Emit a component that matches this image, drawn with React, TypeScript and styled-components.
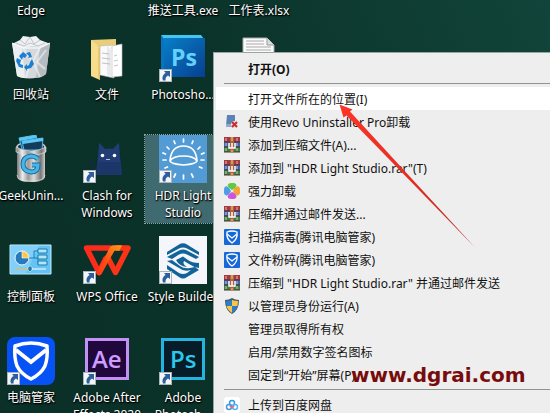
import React from "react";
import styled, { createGlobalStyle, css } from "styled-components";

const GlobalStyle = createGlobalStyle`
  * { box-sizing: border-box; }
  html, body, #root { height: 100%; }
  body {
    margin: 0;
    overflow: hidden;
    font-family: "Noto Sans", "Noto Sans CJK SC", sans-serif;
    font-size: 12px;
  }
`;

const Desktop = styled.main`
  position: relative;
  height: 100vh;
  overflow: hidden;
  padding-top: 2px;
  background: linear-gradient(70deg, #0a3028 0%, #0b3229 45%, #11443a 100%);
`;

const IconGrid = styled.div`
  display: grid;
  grid-template-columns: repeat(4, 76px);
  grid-template-rows: 32px;
  grid-auto-rows: 101px;
  margin-left: -7px;
`;

const Tile = styled.button<{ $selected?: boolean }>`
  display: flex;
  flex-direction: column;
  align-items: center;
  gap: 4px;
  padding: 0;
  border: 0;
  background: none;
  font: inherit;
  color: #fff;
  ${(p) =>
    p.$selected &&
    css`
      align-self: start;
      height: 88px;
      background: #3f6b70;
      outline: 1px dotted #8ba6a4;
    `}
`;

const Label = styled.span`
  line-height: 17px;
  text-align: center;
  white-space: pre;
  text-shadow: 0 1px 2px #000, 1px 1px 1px #000;
`;

const IconFrame = styled.span`
  position: relative;
  flex: none;
  width: 48px;
  height: 48px;
  & > svg { display: block; }
`;

const Badge = styled.svg`
  position: absolute;
  left: 0;
  bottom: 0;
`;

const Menu = styled.nav`
  position: absolute;
  left: 213px;
  top: 52px;
  right: 0;
  bottom: 0;
  overflow: hidden;
  padding: 4px 0 0 2px;
  border: solid #9aa5a1;
  border-width: 1px 0 0 1px;
  background: #eee;
`;

const MenuRow = styled.button<{ $active?: boolean; $bold?: boolean }>`
  display: flex;
  align-items: center;
  gap: 8px;
  width: 100%;
  height: 23px;
  padding: 0 8px;
  border: 0;
  background: ${(p) => (p.$active ? "#fff" : "transparent")};
  font: inherit;
  font-weight: ${(p) => (p.$bold ? 700 : 400)};
  color: #111;
  white-space: pre;
`;

const MenuIcon = styled.span`
  flex: none;
  width: 16px;
  height: 16px;
  & > svg { display: block; }
`;

const Separator = styled.hr`
  height: 1px;
  margin: 3px 0 3px 8px;
  border: 0;
  background: #929292;
`;

const Pointer = styled.svg`
  position: absolute;
  left: 336px;
  top: 102px;
  pointer-events: none;
`;

const Watermark = styled.span`
  position: absolute;
  left: 351px;
  top: 363px;
  font: 700 20px/24px "DejaVu Sans", sans-serif;
  color: #780c0c;
`;

const Shortcut = () => (
  <Badge width="13" height="13" viewBox="0 0 13 13">
    <rect x=".5" y=".5" width="12" height="12" fill="#f3f6f9" stroke="#a9b4bb" />
    <path d="M5 2h6v6L9 6.400C7 7.500 6.200 9 6.600 11.500H4C2.700 8.400 4 5.500 6.700 4.100Z" fill="#2d5e9b" />
  </Badge>
);

const Art = ({ children }: { children: React.ReactNode }) => (
  <svg width="48" height="48" viewBox="0 0 48 48">{children}</svg>
);

const RecycleBin = () => (
  <Art>
    <path d="M5 9 10 42q14 6 29-2L43 9Z" fill="#d5d9dc" />
    <path d="m5 9 10 5 3 30q-5 0-8-2Z" fill="#eceff1" />
    <path d="M43 9 33 14l-4 30q6 0 10-4Z" fill="#b7bcc0" />
    <path d="m16 14 8 12-5 18M33 14l-7 13 7 16M39 16l-9 12 8 7" fill="none" stroke="#f4f5f6" strokeWidth="2" opacity=".6" />
    <path d="m7 9 6-3 3-4 7 1 6-1 4 4 8 3-7 4-9-1-8 2Z" fill="#f0f1f2" />
    <path d="m13 6 5 4 5-7 4 7 6-4M9 9l8 3 6-3 8 3 7-3" fill="none" stroke="#bfc4c8" />
    <path d="m5 9 11 5h17l10-5" fill="none" stroke="#fff" />
    <path d="m12 22 4-4 4 3-2 3-2-1-1 3Z M19 19l4-1 2 5-4 1 1-2Z M10 24l4 2-1 4 3 1v3l-4-1-3-6Z M25 25l2 5-3 4-4 1v2l-3-4 3-3v2l2-1 1-3Z" fill="#1b7fd2" />
  </Art>
);

const Folder = () => (
  <Art>
    <path d="M8 6 33 5v34H17Z" fill="#e9cd78" />
    <path d="m17 12 14-1v33l-14-3Z" fill="#fafafa" stroke="#b5b5b5" strokeWidth=".6" />
    <path d="m29 12 10-2v32l-10 1Z" fill="#fff" stroke="#b9b9b9" strokeWidth=".6" />
    <path d="m24 11 5 7v25l-5-2Z" fill="#e8e9ea" />
    <path d="m19 19 7 1m-7 4 8 1m-8 4 8 1m4-8 3-1m-3 6 4-1m-4 6 4-1" stroke="#aaa" strokeWidth=".7" />
    <path d="M8 6q5 3 8 8l1 32-9-4Z" fill="#f7dc8c" />
    <path d="M16 14v31" stroke="#d8b964" />
  </Art>
);

const PhotoshopOld = () => (
  <Art>
    <defs>
      <linearGradient id="ps" x2="1" y2="1"><stop stopColor="#087fc7" /><stop offset="1" stopColor="#073f91" /></linearGradient>
    </defs>
    <path d="m2 1 3 4v39l-3-3Z" fill="#0873c5" />
    <path d="M2 1h40l3 4H5Z" fill="#42c7f3" />
    <rect x="5" y="4" width="41" height="39" fill="url(#ps)" />
    <text x="12" y="32" fontFamily="Open Sans" fontWeight="700" fontSize="23" fill="#62d2fa">Ps</text>
  </Art>
);

const Spreadsheet = () => (
  <Art>
    <path d="M8 4h24l7 7v36H8Z" fill="#fafafa" stroke="#aaa" />
    <path d="M32 4v7h7" fill="#ddd" stroke="#999" />
    <path d="M11 7h18M11 10h18M11 13h25M11 16h25" stroke="#aaa" />
  </Art>
);

const Geek = () => (
  <Art>
    <defs>
      <linearGradient id="steel"><stop stopColor="#777" /><stop offset=".2" stopColor="#eee" /><stop offset=".4" stopColor="#999" /><stop offset=".6" stopColor="#ddd" /><stop offset=".85" stopColor="#777" /><stop offset="1" stopColor="#ccc" /></linearGradient>
    </defs>
    <path d="M10 14v27q0 6 14 6t14-6V14Z" fill="url(#steel)" />
    <ellipse cx="24" cy="12" rx="14" ry="5" fill="#162a3a" stroke="#ccc" strokeWidth="1.500" />
    <path d="m12 3 17-3 3 14H15Z" fill="#1b5b88" stroke="#4fb9ea" />
    <path d="m12 3 17-3 .6 3L13 6Z" fill="#5cc7f2" />
    <path d="m15 6 21-3-1 12H17Z" fill="#153b5b" stroke="#4fb9ea" />
    <path d="m15 6 21-3v3L16 9Z" fill="#5cc7f2" />
    <path d="M9 12v5q15 7 30 0v-5q-15 8-30 0Z" fill="url(#steel)" stroke="#e5e5e5" strokeWidth=".6" />
    <path d="M31 24q-3-3-7-3-8 1-8 8t8 8q7 0 7-7h-6" fill="none" stroke="#176f9f" strokeWidth="5" />
    <path d="M31 24q-3-3-7-3-8 1-8 8t8 8q7 0 7-7h-6" fill="none" stroke="#48b5e8" strokeWidth="3" />
    <path d="M10 40q0 6 14 6t14-6" fill="none" stroke="#ddd" strokeWidth=".7" />
  </Art>
);

const Clash = () => (
  <Art>
    <path d="M10 25q-3 1-3 4t5 5h4" fill="none" stroke="#15294e" strokeWidth="1.500" />
    <path d="M16 8q3 2 6 6 4-1 8 0 3-4 6-6l1 14 2 18H13l2-18Z" fill="#203d76" />
    <path d="M14 27h24l1 13H13Z" fill="#1a3263" opacity=".65" />
    <circle cx="19.500" cy="20.500" r="1.800" fill="#fff" /><circle cx="31.500" cy="20.500" r="1.800" fill="#fff" />
    <path d="m23 24 1 1 1-1 1 1 1-1" stroke="#dfe7f5" strokeWidth=".8" fill="none" />
  </Art>
);

const Hdr = () => (
  <Art>
    <path d="M0 0h48v48H0Z" fill="#529bd4" />
    <g fill="none" stroke="#fff" strokeWidth="1.700">
      <path d="M11 26Q12 11 24.500 11T38 26q-1 3-13.500 4Q12 29 11 26Z" />
      <path d="M11 26q3-5 13.500-5T38 26" />
      <path strokeLinecap="round" d="M24.500 4v3M15 6l1 2.500M34 6l-1 2.500M8 12l2 2m31-2-2 2M4 18l2.500 1M45 18l-2.500 1M4 25h3m38 0h-3M6 33l2.500-1M43 33l-2.500-1M15 42l1.500-3M34 42l-1.500-3M24.500 40v4" />
    </g>
  </Art>
);

const ControlPanel = () => (
  <Art>
    <path d="M3 9h41v29H3Z" fill="#64c2f5" stroke="#c2edff" />
    <path d="M4 10h28L19 37H4Z" fill="#9bdbfb" opacity=".55" />
    <circle cx="15" cy="22" r="7" fill="#287bbb" stroke="#e9f8ff" />
    <path d="M15 22v-7a7 7 0 0 1 7 7Z" fill="#ffc74d" stroke="#fff" strokeWidth=".6" />
    <path d="M22 22h5v-7h4M27 22h4v6" fill="none" stroke="#1681b8" />
    <path d="M31 13h9v4h-9Zm0 6h9v4h-9Zm0 6h9v4h-9Z" fill="#b4e5fb" stroke="#167cad" />
    <path d="M8 33h15" stroke="#f4b942" /><path d="M24 33h15" stroke="#fff" />
    <path d="m21 31 2-1 2 1v3l-2 2-2-2Z" fill="#167cad" stroke="#fff" strokeWidth=".5" />
  </Art>
);

const Wps = () => (
  <Art>
    <defs>
      <linearGradient id="fold" x1="1" y1="0" x2="0" y2="1"><stop stopColor="#ff9a1c" /><stop offset=".6" stopColor="#ff4a15" /><stop offset="1" stopColor="#ff3a12" /></linearGradient>
    </defs>
    <path d="M28 12H3.500L16 36.500 23 22" fill="none" stroke="#fb2c1c" strokeWidth="5.500" strokeLinejoin="round" />
    <path d="m23.500 19 9 17.500L45 12H33" fill="none" stroke="#fb3418" strokeWidth="5.500" strokeLinejoin="round" />
    <path d="M13.500 37.500 27 11q1-1.800 3-1.800h9l-2.500 5.500h-5L18.500 38q-2.500 3-5-.5Z" fill="url(#fold)" />
  </Art>
);

const StyleBuilder = () => (
  <Art>
    <path d="M0 0h48v48H0Z" fill="#f4f6fb" />
    <g fill="#126398">
      <path d="M8 16 20 8.500q4-2.500 8 0L40 16v3l-12-6.500q-4-2-8 0L8 19Z" />
      <path d="M8 21l12-6.500q4-2 8 0L40 21l-3 2-9-4.500q-4-2-8 0l-7 4.500Z" />
      <path d="m8 25 5-1 8 6q4 3 10 2l5-1 4 3-12 7q-4 3-8 0L8 33v-4l12 8q4 2 8 0l4-3q-7 2-12-2Z" />
      <path d="m17 24 7-3.500 5 3.500q4 3 11 3v5q-6-1-10-4l-5-3q-2 3 3 6-8-1-11-7Z" />
    </g>
  </Art>
);

const Manager = () => (
  <Art>
    <rect width="48" height="48" rx="8" fill="#0752f5" />
    <path d="M8 9q16-6 32 0 1 12-2 20-4 8-14 13Q14 37 10 29 7 21 8 9Z" fill="none" stroke="#fff" strokeWidth="3.500" strokeLinejoin="round" />
    <path d="m9 13 15 12 15-12" fill="none" stroke="#fff" strokeWidth="4" />
  </Art>
);

const AfterEffects = () => (
  <Art>
    <path d="M3.500 2.500h41v39h-41Z" fill="#21083c" stroke="#c391f5" strokeWidth="3" />
    <text x="9" y="31" fontFamily="Open Sans" fontWeight="600" fontSize="24" fill="#cf9cff">Ae</text>
  </Art>
);

const Photoshop = () => (
  <Art>
    <path d="M3.500 2.500h41v39h-41Z" fill="#061d28" stroke="#25b4df" strokeWidth="3" />
    <text x="11" y="31" fontFamily="Open Sans" fontWeight="600" fontSize="24" fill="#2dc6ec">Ps</text>
  </Art>
);

const Small = ({ children }: { children: React.ReactNode }) => (
  <svg width="16" height="16" viewBox="0 0 16 16">{children}</svg>
);

const Revo = () => (
  <Small>
    <path d="M3 1h8v11H2Z" fill="#5c83b8" /><path d="M2 10h8v3H2Z" fill="#8faccd" />
    <circle cx="10.500" cy="10.500" r="3.500" fill="#f0dede" />
    <path d="m8 8 5 5m0-5-5 5" stroke="#c82c2c" strokeWidth="2" />
  </Small>
);

const Rar = () => (
  <Small>
    <path d="M0 0h16v5H0Z" fill="#a53942" /><path d="M0 5h16v5H0Z" fill="#3965b2" /><path d="M0 10h16v5H0Z" fill="#358345" />
    <path d="M0 5h16M0 10h16M0 15h16" stroke="#542b2b" />
    <path d="M2 1v3m11-3v3M2 6v3m11-3v3M2 11v3m11-3v3" stroke="#e6bcb3" />
    <path d="M6 0h4v15H6Z" fill="#b2613d" /><path d="M7 1h2M7 3h2M7 14h2" stroke="#f1d284" />
    <path d="M5 6v5h6V6M8 6v5" fill="none" stroke="#fff" strokeWidth="1.500" />
  </Small>
);

const Clover = () => (
  <Small>
    <path d="M8 7C1 3 4 0 7 0h3c4 1 3 5-2 7Z" fill="#61ca43" />
    <path d="M7 8C3 1 0 3 0 7v3c1 4 5 3 7-2Z" fill="#4f9de9" />
    <path d="M9 8c4-7 7-5 7-1v3c-1 4-5 3-7-2Z" fill="#f5a239" />
    <path d="M8 9c-7 4-4 7-1 7h3c4-1 3-5-2-7Z" fill="#ce54d9" />
  </Small>
);

const Guard = () => (
  <Small>
    <rect width="16" height="16" rx="1" fill="#1668d9" />
    <path d="M3 3q5-2 10 0 1 7-5 11-6-4-5-11Z" fill="none" stroke="#fff" strokeWidth="1.300" />
    <path d="m3 5 5 4 5-4" fill="none" stroke="#fff" strokeWidth="1.300" />
  </Small>
);

const Shield = () => (
  <Small>
    <path d="M8 0q3 2 7 2 0 10-7 14Q1 12 1 2q4 0 7-2Z" fill="#40576b" />
    <path d="M8 2v6H2.500L2 3q3 0 6-1Z" fill="#2a80c7" /><path d="M8 2q3 1 6 1l-.5 5H8Z" fill="#f8c547" />
    <path d="M2.500 8H8v7Q3.500 12 2.500 8Z" fill="#f8c547" /><path d="M8 8h5.500Q12.500 12 8 15Z" fill="#2a80c7" />
  </Small>
);

const Baidu = () => (
  <Small>
    <rect width="16" height="16" rx="3" fill="#fff" />
    <g fill="none" strokeWidth="1.500"><circle cx="8" cy="6" r="2.500" stroke="#2d9be4" /><circle cx="5" cy="10" r="2.500" stroke="#4898df" /><circle cx="11" cy="10" r="2.500" stroke="#55b8ee" /></g>
    <path d="m6 9 2 2 2-2" fill="none" stroke="#e36c7f" strokeWidth="1.500" />
  </Small>
);

type TileData = { label: string; icon?: React.ReactNode; shortcut?: boolean; selected?: boolean };

const tiles: TileData[] = [
  { label: "Edge" },
  { label: "" },
  { label: "推送工具.exe" },
  { label: "工作表.xlsx" },
  { label: "回收站", icon: <RecycleBin /> },
  { label: "文件", icon: <Folder /> },
  { label: "Photosho...", icon: <PhotoshopOld />, shortcut: true },
  { label: "", icon: <Spreadsheet /> },
  { label: "GeekUnin...", icon: <Geek /> },
  { label: "Clash for\nWindows", icon: <Clash />, shortcut: true },
  { label: "HDR Light\nStudio", icon: <Hdr />, shortcut: true, selected: true },
  { label: "" },
  { label: "控制面板", icon: <ControlPanel /> },
  { label: "WPS Office", icon: <Wps />, shortcut: true },
  { label: "Style Builder", icon: <StyleBuilder />, shortcut: true },
  { label: "" },
  { label: "电脑管家", icon: <Manager />, shortcut: true },
  { label: "Adobe After\nEffects 2020", icon: <AfterEffects />, shortcut: true },
  { label: "Adobe\nPhotosh...", icon: <Photoshop />, shortcut: true },
];

const actions: { label: string; icon?: React.ReactNode; active?: boolean }[] = [
  { label: "打开文件所在的位置(I)", active: true },
  { label: "使用Revo Uninstaller Pro卸载", icon: <Revo /> },
  { label: "添加到压缩文件(A)...", icon: <Rar /> },
  { label: '添加到 "HDR Light Studio.rar"(T)', icon: <Rar /> },
  { label: "强力卸载", icon: <Clover /> },
  { label: "压缩并通过邮件发送...", icon: <Rar /> },
  { label: "扫描病毒(腾讯电脑管家)", icon: <Guard /> },
  { label: "文件粉碎(腾讯电脑管家)", icon: <Guard /> },
  { label: '压缩到 "HDR Light Studio.rar" 并通过邮件发送', icon: <Rar /> },
  { label: "以管理员身份运行(A)", icon: <Shield /> },
  { label: "管理员取得所有权" },
  { label: "启用/禁用数字签名图标" },
  { label: "固定到“开始”屏幕(P)" },
];

export default function App() {
  return (
    <Desktop>
      <GlobalStyle />
      <IconGrid>
        {tiles.map((t, i) =>
          t.label || t.icon ? (
            <Tile key={i} $selected={t.selected}>
              {t.icon && (
                <IconFrame>
                  {t.icon}
                  {t.shortcut && <Shortcut />}
                </IconFrame>
              )}
              <Label>{t.label}</Label>
            </Tile>
          ) : (
            <span key={i} />
          )
        )}
      </IconGrid>
      <Menu>
        <MenuRow $bold><MenuIcon />打开(O)</MenuRow>
        <Separator />
        {actions.map((a) => (
          <MenuRow key={a.label} $active={a.active}>
            <MenuIcon>{a.icon}</MenuIcon>
            {a.label}
          </MenuRow>
        ))}
        <Separator />
        <MenuRow><MenuIcon><Baidu /></MenuIcon>上传到百度网盘</MenuRow>
      </Menu>
      <Pointer width="142" height="148" viewBox="0 0 142 148">
        <defs>
          <linearGradient id="tail" x1="0" y1="0" x2="1" y2="1"><stop stopColor="#fb3528" /><stop offset=".5" stopColor="#e42e23" /><stop offset="1" stopColor="#b82a22" /></linearGradient>
        </defs>
        <path d="m3.500 2.500 13 5-2.500 2 125 136L10.500 13.500 7.500 15.500Z" fill="url(#tail)" />
      </Pointer>
      <Watermark>www.dgrai.com</Watermark>
    </Desktop>
  );
}
